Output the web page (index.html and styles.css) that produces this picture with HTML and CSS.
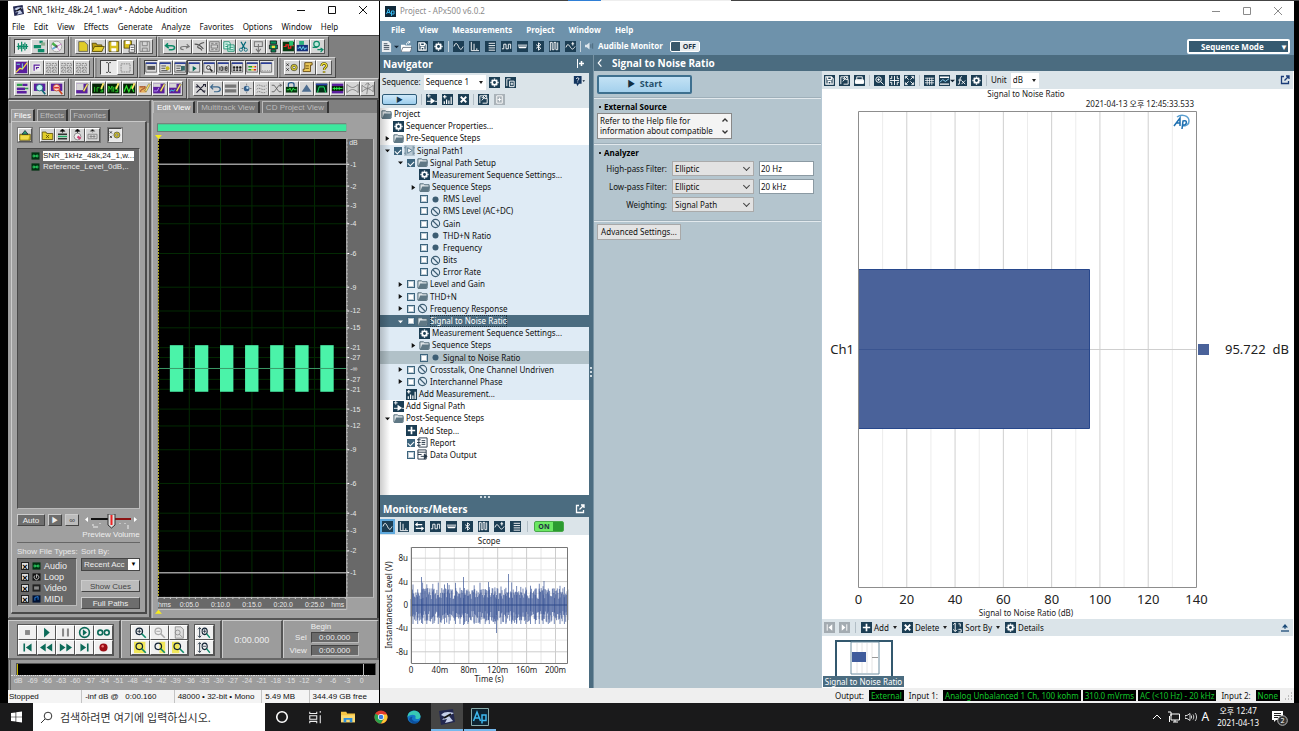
FILE: index.html
```html
<!DOCTYPE html>
<html lang="ko">
<head>
<meta charset="utf-8">
<title>Desktop</title>
<link rel="stylesheet" href="styles.css">
</head>
<body>
<div class="topline"><i class="tl-blue"></i><i class="tl-white"></i></div>
<main class="desktop">

<section class="aud" aria-label="Adobe Audition">
  <header class="titlebar">
    <svg class="app-icon" data-icon="audapp"></svg>
    <span class="title">SNR_1kHz_48k.24_1.wav* - Adobe Audition</span>
    <span class="winbtns"><button aria-label="Minimize" data-icon="min"></button><button aria-label="Maximize" data-icon="max"></button><button aria-label="Close" data-icon="close"></button></span>
  </header>
  <nav class="aud-menu"><a href="#">File</a><a href="#">Edit</a><a href="#">View</a><a href="#">Effects</a><a href="#">Generate</a><a href="#">Analyze</a><a href="#">Favorites</a><a href="#">Options</a><a href="#">Window</a><a href="#">Help</a></nav>
  <div class="aud-tools">
    <div class="trow r1">
      <div class="tgroup" data-tools="wave! multi cd"></div>
      <div class="tgroup" data-tools="new open save saveas saveg"></div>
      <div class="tgroup" data-tools="undo redo cutline trim copy cut paste mixp red bluew conv"></div>
    </div>
    <div class="trow r2">
      <div class="tgroup" data-tools="spect corner grp1 grp1 grp1"></div>
      <div class="tgroup" data-tools="ibeam! marquee"></div>
      <div class="tgroup" data-tools="win1! win2 win3 winplay! winzoom! wintime! winsel! winlvl! winblank!"></div>
      <div class="tgroup" data-tools="prefs script help"></div>
    </div>
    <div class="trow r3">
      <div class="tgroup" data-tools="bars lens1 lens2"></div>
      <div class="tgroup" data-tools="pen1 irs mis sinep pen2 pen3 pen4"></div>
      <div class="tgroup" data-tools="amp rev2 eqbars dot waves cross lockw tri trap midw bow bow2"></div>
    </div>
  </div>

  <div class="aud-main">
    <aside class="org">
      <div class="tabs"><button class="tab on">Files</button><button class="tab">Effects</button><button class="tab">Favorites</button></div>
      <div class="org-body">
        <div class="org-tools"><div class="og" data-tools="import"></div><div class="og og4" data-tools="closef insm eject insb"></div><div class="og" data-tools="prefs!"></div></div>
        <ul class="files">
          <li><svg data-icon="wavf"></svg><span class="sel">SNR_1kHz_48k,24_1,w...</span></li>
          <li><svg data-icon="wavf"></svg><span>Reference_Level_0dB,..</span></li>
        </ul>
        <div class="preview">
          <button class="gbtn auto">Auto</button><button class="gbtn" aria-label="Play">▶</button><button class="gbtn lit" aria-label="Loop">∞</button>
          <div class="vol"><svg viewBox="0 0 52 17" data-icon="slider"></svg><span>Preview Volume</span></div>
        </div>
        <div class="org-opts">
          <div class="types"><span class="cap">Show File Types:</span>
            <div class="typebox">
              <label><input type="checkbox" checked><svg data-icon="wavf"></svg>Audio</label>
              <label><input type="checkbox" checked><svg data-icon="loopf"></svg>Loop</label>
              <label><input type="checkbox" checked><svg data-icon="vidf"></svg>Video</label>
              <label><input type="checkbox" checked><svg data-icon="midf"></svg>MIDI</label>
            </div>
          </div>
          <div class="sort"><label class="cap" for="sortby">Sort By:</label>
            <span class="combo dark"><select id="sortby"><option>Recent Acc</option></select></span>
            <button class="gbtn lit">Show Cues</button>
            <button class="gbtn">Full Paths</button>
          </div>
        </div>
      </div>
    </aside>
    <section class="editor">
      <div class="tabs"><button class="tab on">Edit View</button><button class="tab">Multitrack View</button><button class="tab">CD Project View</button></div>
      <svg id="edit" class="edit" viewBox="0 0 226 505" role="img" aria-label="Waveform"></svg>
    </section>
  </div>

  <div class="transport">
    <div class="tp"><div class="pad p5" data-tools="stop play pause playc inf tostart rew ff toend rec"></div></div>
    <div class="tp zooms"><div class="pad p3" data-tools="zin zout zfull zsel zselr zsell"></div><div class="pad p1" data-tools="vin vout"></div></div>
    <div class="tp clock">0:00.000</div>
    <div class="tp selview">
      <span></span><b>Begin</b>
      <label for="s1">Sel</label><input id="s1" value="0:00.000">
      <label for="s2">View</label><input id="s2" value="0:00.000">
    </div>
  </div>
  <div class="levels"><div class="meter"></div><div class="scale" id="scale"></div></div>
  <footer class="aud-status"><span>Stopped</span><span>-inf dB @ &nbsp; 0:00.160</span><span>48000 • 32-bit • Mono</span><span>5.49 MB</span><span>344.49 GB free</span></footer>
</section>

<section class="apx" aria-label="APx500">
  <header class="titlebar pale">
    <svg class="app-icon" data-icon="ap"></svg>
    <span class="title">Project - APx500 v6.0.2</span>
    <span class="winbtns"><button aria-label="Minimize" data-icon="min"></button><button aria-label="Maximize" data-icon="max"></button><button aria-label="Close" data-icon="close"></button></span>
  </header>
  <div class="apx-top">
    <div>
      <nav class="apx-menu"><a href="#">File</a><a href="#">View</a><a href="#">Measurements</a><a href="#">Project</a><a href="#">Window</a><a href="#">Help</a></nav>
      <div class="apx-bar"><div class="ai" data-tools="doc caret openx savex gear"></div><i class="vsep"></i><div class="ai" data-tools="sine fft list square level bt digital sweep"></div><i class="vsep"></i><svg class="spk" data-icon="spk"></svg><b>Audible Monitor</b><button class="toggle">OFF</button></div>
    </div>
    <button class="mode">Sequence Mode<span>▼</span></button>
  </div>
  <div class="apx-main">
    <div class="navcol">
      <h2 class="bar nav-h">Navigator<svg data-icon="pin"></svg></h2>
      <div class="seqrow"><label for="seq">Sequence:</label><span class="combo tri white"><select id="seq"><option>Sequence 1</option></select></span><div class="ai" data-tools="gear copyx"></div><button class="helpb" aria-label="Help" data-icon="helpq"></button></div>
      <div class="runrow"><button class="run" aria-label="Run">▶</button><i class="vsep"></i><div class="ai" data-tools="addsp addmeas delx"></div><i class="vsep"></i><div class="ai" data-tools="expand addg"></div></div>
      <ul class="tree" id="tree"></ul>
      <div class="split"><svg viewBox="0 0 12 4"><path d="M1 1h2v2H1zM5 1h2v2H5zM9 1h2v2H9z" fill="#cdd9e0"/></svg></div>
      <h2 class="bar mon-h">Monitors/Meters<svg data-icon="popout"></svg></h2>
      <div class="monbar"><div class="ai" data-tools="sine! fft swap square level bt digital sweep list"></div><i class="vsep"></i><button class="toggle on">ON</button></div>
      <svg id="scope" class="scope" viewBox="0 0 209 153" role="img" aria-label="Scope"></svg>
    </div>
    <div class="gutter"><svg viewBox="0 0 4 12"><path d="M1 1h2v2H1zM1 5h2v2H1zM1 9h2v2H1z" fill="#cdd9e0"/></svg></div>
    <div class="work">
      <h2 class="bar work-h"><svg data-icon="back"></svg>Signal to Noise Ratio</h2>
      <div class="workcols">
        <div class="settings">
          <div class="sec"><button class="start"><span>▶</span>Start</button></div>
          <div class="sec"><h3>External Source</h3>
            <div class="note"><p>Refer to the Help file for information about compatible</p><span class="spin"><button aria-label="Up" data-icon="up"></button><button aria-label="Down" data-icon="down"></button></span></div></div>
          <div class="sec"><h3>Analyzer</h3>
            <div class="form">
              <label for="hp">High-pass Filter:</label><span class="combo chev"><select id="hp"><option>Elliptic</option></select></span><input aria-label="High-pass frequency" value="20 Hz">
              <label for="lp">Low-pass Filter:</label><span class="combo chev"><select id="lp"><option>Elliptic</option></select></span><input aria-label="Low-pass frequency" value="20 kHz">
              <label for="wt">Weighting:</label><span class="combo chev"><select id="wt"><option>Signal Path</option></select></span>
            </div></div>
          <div class="sec"><button class="adv">Advanced Settings...</button></div>
        </div>
        <div class="result">
          <div class="resbar"><div class="ai" data-tools="savex expand print"></div><i class="vsep"></i><div class="ai" data-tools="zoomx fitx fitc"></div><i class="vsep"></i><div class="ai" data-tools="table graph caret fx gear"></div><i class="vsep"></i><label for="unit">Unit</label><span class="combo tri white unit"><select id="unit"><option>dB</option></select></span><svg class="pop" data-icon="popoutb"></svg></div>
          <svg id="chart" class="chart" viewBox="0 0 472 530" role="img" aria-label="Signal to Noise Ratio"></svg>
          <div class="resbar low"><div class="ai" data-tools="prevg nextg"></div><i class="vsep"></i><button class="tx"><svg data-icon="plus"></svg>Add<i></i></button><button class="tx"><svg data-icon="delx"></svg>Delete<i></i></button><button class="tx"><svg data-icon="sortx"></svg>Sort By<i></i></button><button class="tx"><svg data-icon="gear"></svg>Details</button><svg class="pop" data-icon="upl"></svg></div>
          <div class="thumbs"><figure><svg viewBox="0 0 58 36"><rect x="1" y="1" width="56" height="36" fill="#fff" stroke="#33586e" stroke-width="2"/><path d="M16 2h28v32H16z" fill="#fff" stroke="#6d8ea1"/><path d="M22 3v30M27 3v30M32 3v30M37 3v30" stroke="#e4e4e4"/><path d="M17 12h14v10H17z" fill="#3f5c9c"/><path d="M37 17.500h6" stroke="#999"/></svg><figcaption>Signal to Noise Ratio</figcaption></figure></div>
        </div>
      </div>
    </div>
  </div>
  <footer class="apx-status"><span>Output:</span><b>External</b><span>Input 1:</span><b>Analog Unbalanced 1 Ch, 100 kohm</b><b>310.0 mVrms</b><b>AC (&lt;10 Hz) - 20 kHz</b><span>Input 2:</span><b>None</b><svg class="grip" data-icon="grip"></svg></footer>
</section>
</main>

<footer class="taskbar">
  <button class="startb" aria-label="Start" data-icon="winlogo"></button>
  <label class="search"><svg data-icon="mag"></svg><input aria-label="Search" value="검색하려면 여기에 입력하십시오."></label>
  <div class="apps"><button aria-label="Cortana" data-icon="cortana"></button><button aria-label="Task view" data-icon="tview"></button><button aria-label="Explorer" data-icon="folderw"></button><button aria-label="Chrome" data-icon="chrome"></button><button aria-label="Edge" data-icon="edge"></button><button class="act" aria-label="Audition" data-icon="audapp"></button><button class="runn" aria-label="APx" data-icon="apbig"></button></div>
  <div class="tray"><svg data-icon="chevup"></svg><svg data-icon="net"></svg><svg data-icon="snd"></svg><b>A</b><time>오후 12:47<br>2021-04-13</time><svg class="notif" data-icon="notif"></svg></div>
</footer>
<script src="app.js"></script>
</body>
</html>
```

FILE: styles.css
```css
* { box-sizing: border-box; }
html, body { height: 100%; margin: 0; }
body { display: flex; flex-direction: column; background: #000; overflow: hidden; font: 8px/12px "Noto Sans", "Noto Sans CJK KR", sans-serif; color: #111; }
button, input, select { font: inherit; color: inherit; margin: 0; padding: 0; border: 0; border-radius: 0; background: none; min-width: 0; }
a { color: inherit; text-decoration: none; }
h2, h3, p, ul, figure { margin: 0; padding: 0; }
ul { list-style: none; }
svg { display: block; flex: none; }
button > svg { width: 100%; height: 100%; }
.topline { height: 1px; flex: none; background: #444; display: flex; padding-left: 568px; }
.tl-blue { width: 33px; background: #2f7fd6; }
.tl-white { width: 130px; background: #eee; }
.desktop { flex: 1; min-height: 0; display: grid; grid-template-columns: 371fr 914fr; gap: 1px; padding: 0 5px 0 8px; }
.titlebar { display: flex; align-items: center; background: #fff; height: 18px; flex: none; padding-left: 5px; gap: 3px; }
.titlebar .title { flex: 1; }
.app-icon { width: 11px; height: 11px; }
.winbtns { display: flex; gap: 21px; padding-right: 11px; }
.winbtns button { width: 10px; height: 10px; }

/* Audition */
.aud { display: flex; flex-direction: column; background: #9c9c9c; min-height: 0; min-width: 0; }
.aud-menu { display: flex; gap: 9px; background: #fff; height: 16px; line-height: 16px; padding-left: 4px; flex: none; }
.aud-tools { background: #7f7f7f; flex: none; border-top: 1px solid #444; }
.trow { display: flex; height: 21px; }
.r1 { padding-right: 50px; }
.r2 { padding-right: 43px; }
.tgroup { display: flex; background: #a0a0a0; padding: 2px 3px 2px 5px; border: solid; border-width: 1px; border-color: #d0d0d0 #484848 #484848 #c8c8c8; box-shadow: inset 2px 0 #8b8b8b; min-width: 0; }
.tgroup button { flex: 1; height: 15px; }
.r1 .tgroup:nth-child(1), .r3 .tgroup:nth-child(1) { flex: 56; }
.r1 .tgroup:nth-child(2) { flex: 86; }
.r1 .tgroup:nth-child(3) { flex: 179; }
.r2 .tgroup:nth-child(1) { flex: 86; }
.r2 .tgroup:nth-child(2) { flex: 39; }
.r2 .tgroup:nth-child(3) { flex: 148; }
.r2 .tgroup:nth-child(4) { flex: 55; }
.r3 .tgroup:nth-child(2) { flex: 117; }
.r3 .tgroup:nth-child(3) { flex: 198; }
.tgroup button, .og button, .pad button { background: #d6d6d6; border: 1px solid; border-color: #fff #555 #555 #fff; display: block; }
.tgroup button.down, .og button.down { background: #e8e8e8; border-color: #444 #eee #eee #444; }
.aud-main { flex: 1; min-height: 0; display: grid; grid-template-columns: 142fr 227fr; gap: 1px; border-top: 1px solid #555; padding-left: 1px; }
.org, .editor { display: flex; flex-direction: column; min-height: 0; min-width: 0; }
.org { border: solid; border-width: 1px 2px 1px 0; border-color: #ccc #555 #666 #bbb; padding: 8px 2px 3px; background: linear-gradient(#808080 22px, #a0a0a0 22px); font-family: "Liberation Sans", Arial, sans-serif; }
.tabs { display: flex; gap: 2px; color: #e4e4e4; height: 12px; flex: none; font-family: "Liberation Sans", Arial, sans-serif; }
.tab { border: solid; border-width: 1px 2px 0 1px; border-color: #bbb #333 #333 #bbb; background: #757575; padding: 0 3px; line-height: 11px; color: #bdbdbd; white-space: nowrap; }
.tab.on { background: #9c9c9c; color: #fff; }
.org .tab { padding: 0 2px; }
.org-body { flex: 1; min-height: 0; display: flex; flex-direction: column; padding: 5px 5px 3px; border: solid; border-width: 1px 2px 2px 1px; border-color: #c8c8c8 #4a4a4a #4a4a4a #ccc; background: #a0a0a0; }
.org-tools { display: flex; gap: 6px; height: 16px; margin-bottom: 5px; flex: none; }
.og { display: flex; border: 1px solid #777; }
.og button { width: 14px; height: 14px; }
.og4 button { width: 15px; }
.files { flex: 1; background: #696969; border: 1px solid; border-color: #4a4a4a #bbb #bbb #4a4a4a; color: #eee; padding: 1px 2px 0 13px; min-height: 0; }
.files li { display: flex; align-items: center; gap: 3px; height: 11px; white-space: nowrap; }
.files span { line-height: 10px; }
.files svg, .typebox svg { width: 9px; height: 8px; }
.files .sel { background: #fff; color: #222; }
.preview { display: flex; align-items: flex-start; gap: 3px; height: 34px; padding-top: 5px; border-bottom: 1px solid #666; flex: none; }
.gbtn { background: #6d6d6d; color: #eee; border: 1px solid; border-color: #ccc #444 #444 #ccc; height: 12px; line-height: 9px; width: 14px; }
.gbtn.auto { width: 28px; }
.gbtn.lit { background: #bcbcbc; color: #444; }
.vol { flex: 1; text-align: center; color: #eee; white-space: nowrap; }
.vol svg { width: 52px; height: 17px; margin: 0 auto; }
.vol span { display: block; line-height: 8px; }
.org-opts { display: flex; gap: 4px; padding-top: 3px; flex: none; }
.types { width: 60px; }
.sort { flex: 1; display: flex; flex-direction: column; gap: 5px; }
.sort .gbtn { width: 100%; }
.cap { display: block; color: #e8e8e8; white-space: nowrap; line-height: 12px; height: 12px; }
.sort .cap { margin-bottom: -5px; }
.typebox { background: #696969; border: 1px solid; border-color: #444 #bbb #bbb #444; color: #eee; padding: 1px 3px 1px; height: 48px; font-size: 9px; }
.typebox label { display: flex; align-items: center; gap: 3px; height: 11px; }
.typebox input { appearance: none; width: 8px; height: 8px; background: #ddd; border: 1px solid #222; display: grid; place-items: center; }
.typebox input::before { content: "×"; color: #000; font: bold 9px/8px "Liberation Sans", sans-serif; }
.combo { position: relative; display: block; }
.combo select { appearance: none; width: 100%; height: 100%; padding-left: 2px; }
.combo::after { content: ""; position: absolute; pointer-events: none; }
.combo.dark { height: 13px; background: #6d6d6d; border: 1px solid #444; color: #eee; margin-bottom: 4px; }
.combo.dark::after { content: "▼"; right: 0; top: 0; bottom: 0; width: 11px; background: #fff; color: #000; font-size: 6px; text-align: center; line-height: 11px; }
.editor { background: #7f7f7f; border-left: 1px solid #bbb; border-right: 2px solid #333; }
.editor .tabs { margin-top: 1px; }
.edit { width: 100%; flex: 1; min-height: 0; background: #a0a0a0; font-family: "Liberation Sans", Arial, sans-serif; font-size: 7px; }
.transport { display: flex; height: 42px; flex: none; border-top: 2px solid #555; border-bottom: 2px solid #666; color: #eee; background: #9c9c9c; }
.tp { display: flex; padding: 3px 5px 3px 8px; border: solid; border-width: 1px 2px 0 1px; border-color: #ccc #555 #555 #ccc; align-items: center; gap: 5px; }
.pad { display: grid; border: 1px solid #555; }
.pad button { width: 19px; height: 15px; background: #f0f0f0; }
.p5 { grid-template-columns: repeat(5, auto); }
.p3 { grid-template-columns: repeat(3, auto); }
.tp.clock { flex: 60; justify-content: center; font: 9px/12px "Liberation Sans", sans-serif; padding: 0; }
.tp.selview { flex: 95; display: grid; grid-template-columns: 22px 48px; grid-template-rows: 8px 12px 12px; gap: 1px 4px; padding: 1px; align-content: center; font-family: "Liberation Sans", sans-serif; }
.selview b { font-weight: 400; line-height: 8px; }
.selview label { text-align: right; line-height: 11px; }
.selview input { width: 48px; height: 11px; background: #696969; border: 1px solid; border-color: #444 #bbb #bbb #444; text-align: center; font-size: 8px; }
.levels { height: 30px; padding: 3px 3px 0 5px; flex: none; border-left: 3px double #666; }
.meter { height: 12px; background: linear-gradient(90deg, #c8b800 1px, #000 1px); border: 1px solid #555; border-bottom: 0; position: relative; }
.meter::after { content: ""; position: absolute; right: 11px; top: 0; bottom: 0; width: 1px; background: #bbb; }
.scale { display: flex; color: #e0e0e0; font: 7px/10px "Liberation Sans", sans-serif; margin-left: -5px; padding-right: 7px; }
.scale span { flex: 1; text-align: center; width: 0; white-space: nowrap; border-top: 1px dotted #ddd; }
.aud-status { display: flex; background: #f4f4f4; height: 13px; line-height: 13px; flex: none; white-space: nowrap; font-family: "Liberation Sans", Arial, sans-serif; }
.aud-status span { padding-left: 3px; border-right: 1px solid #c4c4c4; flex: 50; overflow: hidden; }
.aud-status span:nth-child(1) { flex: 75; padding-left: 1px; }
.aud-status span:nth-child(2) { flex: 92; }
.aud-status span:nth-child(3) { flex: 87; }
.aud-status span:nth-child(4) { flex: 45; }
.aud-status span:nth-child(5) { flex: 69; border: 0; }

/* APx500 */
.apx { display: flex; flex-direction: column; background: #b4c5ce; min-height: 0; min-width: 0; }
.titlebar.pale { height: 20px; color: #8a8a8a; gap: 4px; }
.apx-top { background: #6e92ab; display: flex; justify-content: space-between; align-items: flex-end; height: 34px; flex: none; color: #fff; }
.apx-menu { display: flex; gap: 14px; padding-left: 11px; font: 700 8px/17px "Open Sans", sans-serif; height: 16px; }
.apx-bar { display: flex; align-items: center; gap: 4px; height: 18px; padding-left: 1px; font: 8px/12px "Open Sans", sans-serif; }
.apx-bar b { font-weight: 700; }
.ai { display: flex; gap: 4px; }
.ai button { width: 11px; height: 11px; }
.apx-bar .ai, .seqrow .ai, .runrow .ai { gap: 5px; }
.ai button.down { outline: 2px solid #5fa9dd; }
.ai .caret { width: 5px; margin: 0 -3px; }
.resbar .ai .caret { margin: 0 -3px 0 -4px; }
.vsep { width: 1px; height: 11px; background: #c8d4dc; flex: none; }
.spk { width: 9px; height: 10px; }
.toggle { width: 30px; height: 11px; border: 1px solid #fff; border-radius: 2px; background: linear-gradient(90deg, #39576a 9px, #e8edf0 9px); color: #234; font: 700 7px/9px "Open Sans", sans-serif; padding-left: 9px; margin-left: 3px; }
.toggle.on { background: linear-gradient(90deg, #6be863 18px, #2b9b30 18px); padding: 0 10px 0 0; border-color: #49a84a; margin-left: 0; }
.mode { width: 103px; height: 15px; margin: 0 4px 1px 0; border: 2px solid #fff; border-radius: 2px; background: #355a70; font: 700 8px/11px "Open Sans", sans-serif; display: flex; justify-content: space-between; padding-left: 12px; }
.apx-main { flex: 1; min-height: 0; display: grid; grid-template-columns: 209fr 5fr 700fr; }
.bar { background: #4b6c80; color: #fff; display: flex; align-items: center; font: 700 10px/16px "Open Sans", sans-serif; flex: none; }
.navcol { display: flex; flex-direction: column; min-height: 0; min-width: 0; background: #dbe4e9; }
.nav-h { height: 18px; padding: 0 4px 0 3px; justify-content: space-between; }
.nav-h svg, .mon-h svg { width: 10px; height: 10px; }
.seqrow { display: flex; align-items: center; height: 18px; gap: 3px; padding: 0 3px 0 2px; }
.combo.white { background: #fff; width: 62px; height: 15px; }
.combo.tri::after { right: 3px; top: 6px; border: 2px solid transparent; border-top: 3px solid #222; }
.helpb { width: 14px; height: 12px; margin-left: auto; }
.runrow { display: flex; align-items: center; height: 17px; gap: 4px; padding-left: 2px; }
.run { width: 35px; height: 11px; border: 1px solid #2e5b78; border-radius: 2px; background: linear-gradient(#cfe9fa, #9ccdec); font-size: 7px; line-height: 8px; color: #16384d; }
.runrow .vsep, .monbar .vsep, .resbar .vsep { background: #b2bec6; }
.tree { flex: 1; min-height: 0; background: #fff; display: flex; flex-direction: column; padding: 0 0 34px; position: relative; white-space: nowrap; }
.tree::after { content: ""; position: absolute; left: 0; top: 0; bottom: 0; width: 10px; background: linear-gradient(90deg, #0003, #0000); }
.tree li { flex: 1; min-height: 0; display: flex; align-items: center; }
.tree .blue { background: #dfebf5; }
.tree .hl { background: #b1c1c8; }
.tree .cur { background: #4b6c80; color: #fff; }
.tree .cur .lbl { outline: 1px dotted #1d2f3a; outline-offset: -1px; }
.tree .l0 { padding-left: 1px; }
.tree .l2 { padding-left: 13px; }
.tree .l3 { padding-left: 26px; }
.tree .ar { width: 13px; padding-left: 5px; flex: none; }
.tree .ar svg { width: 5px; height: 7px; }
.tree input { appearance: none; width: 8px; height: 8px; border: 1px solid #3c647d; background: #fff; margin: 0 2px 0 1px; outline: 1px solid #3c647d55; outline-offset: -2px; flex: none; }
.tree input:checked { background: #3c647d; display: grid; place-items: center; outline: 0; }
.tree input:checked::before { content: ""; width: 5px; height: 3px; border: solid #fff; border-width: 0 0 1px 1px; transform: rotate(-45deg); }
.tree .ic { width: 11px; height: 11px; margin-right: 2px; }
.split { background: #4b6c80; height: 5px; flex: none; }
.split svg { width: 12px; height: 4px; margin: 0 auto; }
.mon-h { height: 17px; padding: 0 4px 0 3px; justify-content: space-between; }
.monbar { display: flex; align-items: center; height: 18px; gap: 6px; padding-left: 2px; flex: none; }
.monbar .ai { gap: 5px; }
.scope { width: 100%; flex: none; height: 153px; background: #fff; }
.gutter { background: #4b6c80; border-right: 1px solid #7893a3; display: flex; align-items: center; }
.gutter svg { width: 4px; height: 12px; }
.work { display: flex; flex-direction: column; min-width: 0; min-height: 0; }
.work-h { height: 16px; gap: 7px; padding-left: 2px; }
.work-h svg { width: 9px; height: 10px; }
.workcols { flex: 1; min-height: 0; display: grid; grid-template-columns: 227fr 473fr; }
.settings { min-width: 0; padding-top: 4px; }
.sec { padding: 0 3px 5px; border-bottom: 1px solid #e2e9ed; margin-bottom: 1px; box-shadow: 0 -1px #9fb0ba inset; }
.sec:last-child { border: 0; box-shadow: none; margin-top: 2px; }
.start { width: 95px; height: 19px; border: 2px solid #3e708f; border-radius: 2px; background: linear-gradient(#c3e2f5, #a4d0ec); font: 700 9px/14px "Open Sans", sans-serif; color: #234f6b; display: flex; justify-content: center; gap: 4px; margin-bottom: -1px; }
.start span { color: #122f42; }
.sec h3 { font: 700 8px/13px "Open Sans", sans-serif; padding-left: 7px; position: relative; color: #000; }
.sec h3::before { content: ""; position: absolute; left: 2px; top: 6px; width: 2px; height: 2px; background: #222; }
.note { width: 135px; height: 26px; background: #f4f4f4; border: 1px solid #888; display: flex; padding-left: 2px; line-height: 10px; }
.note p { flex: 1; padding-top: 2px; }
.spin { display: flex; flex-direction: column; justify-content: space-around; }
.spin button { width: 12px; height: 8px; }
.form { display: grid; grid-template-columns: 69px 82px 55px; gap: 3px 5px; padding: 2px 0 4px 1px; align-items: center; }
.form label { text-align: right; white-space: nowrap; }
.form .chev { height: 15px; background: #e2e2e2; border: 1px solid #aaa; }
.combo.chev::after { right: 4px; top: 3px; width: 4px; height: 4px; border: solid #444; border-width: 0 1px 1px 0; transform: rotate(45deg); }
.form input { background: #fff; border: 1px solid #8b9aa3; height: 15px; padding-left: 1px; }
.adv { height: 16px; width: 84px; background: #e4e4e4; border: 1px solid #a8a8a8; white-space: nowrap; }
.result { display: flex; flex-direction: column; background: #fff; min-width: 0; min-height: 0; border-left: 1px solid #b6c8d4; }
.resbar { display: flex; align-items: center; height: 18px; background: #dbe4e9; gap: 4px; padding: 0 3px 0 2px; flex: none; margin-right: 1px; }
.resbar .unit { width: 28px; }
.resbar .pop { width: 10px; height: 10px; margin-left: auto; }
.resbar.low { height: 17px; gap: 5px; }
.tx { display: flex; align-items: center; gap: 2px; white-space: nowrap; }
.tx svg { width: 11px; height: 11px; }
.tx i { border: 2px solid transparent; border-top: 3px solid #222; margin: 2px 0 0 2px; }
.chart { width: 100%; flex: 1; min-height: 0; }
.thumbs { height: 52px; padding: 4px 0 0 1px; flex: none; }
.thumbs figure { width: 81px; }
.thumbs svg { width: 58px; height: 36px; margin: 0 auto; }
.thumbs figcaption { background: #4b6c80; color: #fff; text-align: center; height: 11px; line-height: 11px; white-space: nowrap; }
.apx-status { background: #efefef; height: 15px; display: flex; align-items: center; justify-content: flex-end; gap: 5px; flex: none; white-space: nowrap; padding-right: 1px; }
.apx-status b { font-weight: 400; background: #000; color: #12c42a; line-height: 11px; padding: 0 2px; }
.apx-status b + b { margin-left: -3px; }
.grip { width: 8px; height: 8px; }

/* Taskbar */
.taskbar { height: 28px; background: #1a1a1b; display: flex; flex: none; align-items: stretch; color: #fff; }
.startb { width: 33px; padding: 8px 11px; }
.search { width: 232px; background: #fff; color: #333; display: flex; align-items: center; gap: 7px; padding-left: 7px; }
.search svg { width: 13px; height: 13px; }
.search input { flex: 1; font: 11px/20px "Noto Sans CJK KR", sans-serif; }
.apps { display: flex; flex: 1; padding-left: 1px; gap: 1px; }
.apps button { width: 32px; padding: 5px 7px; border-bottom: 2px solid transparent; border-top: 2px solid transparent; }
.apps button:nth-child(-n+3) { padding: 5px 9px; }
.apps .act { background: #454545; border-color: #454545 #454545 #76b9ed; padding: 4px 7px; }
.apps .runn { border-bottom-color: #76b9ed; padding: 3px 6px; }
.tray { display: flex; align-items: center; gap: 5px; padding-right: 11px; }
.tray svg { width: 12px; height: 12px; }
.tray b { font: 12px/14px "Noto Sans", sans-serif; }
.tray time { text-align: center; font-size: 8px; line-height: 12px; padding: 0 7px 0 3px; white-space: nowrap; }
.tray .notif { width: 17px; height: 17px; }
```

FILE: app.js
```js
const T = '#1c3e54', P = '#5b1f9e', G = '#0d8a68';
const tile = s => `<rect width="12" height="12" fill="${T}"/><g fill="none" stroke="#fff">${s}</g>`;
const winf = s => `<path d="M1 2h14v12H1z" fill="#dcdcdc" stroke="#555"/><path d="M1 1.500h14v2H1z" fill="#2b3f9c"/>${s}`;
const pen = s => `<path d="M0 2h14v12H0z" fill="${P}"/>${s}<path d="M8 11l5-9 2 1-5 9z" fill="#ffe96a" stroke="#333" stroke-width=".5"/>`;
const greenbox = s => `<path d="M0 2h15v12H0z" fill="#052405"/>${s}<path d="M10 8l3-7 2 1-3 7z" fill="#ffe96a"/>`;
const note = (f, s) => `<path d="M3 2h7l4 4v8H3z" fill="${f}" stroke="#555"/>${s || ''}`;
const mag = (s, c) => `<circle cx="6.500" cy="6.500" r="4" fill="none" stroke="${c || '#123'}" stroke-width="1.500"/><path d="M9.500 9.500l5 5" stroke="${c || G}" stroke-width="2"/>${s || ''}`;
const gry = '#777';
// name: [viewBox size, markup]
const ICONS = {
  min: [10, '<path d="M1 5.500h8" stroke="currentColor"/>'],
  max: [10, '<path d="M1.500 1.500h7v7h-7z" fill="none" stroke="currentColor"/>'],
  close: [10, '<path d="M1 1l8 8M9 1l-8 8" stroke="currentColor"/>'],
  audapp: [16, '<path d="M0 2l14-2 2 13-14 3z" fill="#232850"/><path d="M2 6c4-4 8-3 13-2l-5 3 4 5-8 2 2-4-5 1 3-3z" fill="#c5cfea"/><path d="M5 9l7-4" stroke="#111" stroke-width="2"/>'],
  ap: [11, '<rect width="11" height="11" fill="#10293a"/><path d="M1.500 8l2-5 2 5M2 6.500h3M6.500 10V5h2.500v3H7" fill="none" stroke="#35b7ee"/>'],
  apbig: [18, '<path d="M.5.5h17v17H.5z" fill="#0d2331" stroke="#8aa"/><path d="M2.500 13l3.500-9 3.500 9M4 10h4M11 15.500V7h4v5.500h-4" fill="none" stroke="#3db8ee" stroke-width="1.500"/>'],
  wave: [16, `<path d="M1 8h14M3 4v8M5 6v5M7 2v12M9 5v6M11 3v10M13 5v6" stroke="${G}" stroke-width="1.500"/>`],
  multi: [16, `<path d="M8 1h4v3H8zM1 6h9v4H1zM6 11h8v4H6z" fill="${G}"/><path d="M10 3h5v4h-5z" fill="#8fae8f"/>`],
  cd: [16, '<circle cx="8" cy="8" r="6.500" fill="#eee" stroke="#999"/><path d="M8 8l6-3M8 8l4 5" stroke="#d66bd6"/><path d="M8 8L3 4" stroke="#48b048" stroke-width="3"/><path d="M8 8l-5 3" stroke="#6ad" stroke-width="2"/><circle cx="8" cy="8" r="1.500" fill="#555"/>'],
  new: [16, note('#e0cc28')],
  open: [16, '<path d="M1 4h5l1 2h6v8H2z" fill="#b99c14" stroke="#544600"/><path d="M4 8h12l-3 6H1z" fill="#e6cf30" stroke="#544600"/>'],
  save: [16, '<path d="M2 2h12v12H2z" fill="#d8c020" stroke="#544600"/><path d="M5 2h6v5H5zM5 10h6v4H5z" fill="#fff"/>'],
  saveas: [16, '<path d="M1 1h9v9H1z" fill="#d8c020" stroke="#544600"/><path d="M3 1h5v4H3z" fill="#fff"/><path d="M8 6h6v9H7z" fill="#fff" stroke="#333"/><path d="M9 9h4M9 12h4" stroke="#333"/>'],
  saveg: [16, '<path d="M2 2h12v12H2zM5 2v5h6V2M5 14v-4h6v4" fill="#ccc" stroke="#777"/>'],
  undo: [16, `<path d="M5 4L2 7l4 3M2.500 7h7c5 0 5 5 0 5H6" fill="none" stroke="${G}" stroke-width="2"/>`],
  redo: [16, `<path d="M11 5l3 3-4 2M13 8H7c-5 0-5 4 0 4" fill="none" stroke="${gry}" stroke-width="1.500"/>`],
  cutline: [16, '<path d="M2 5c5 0 7 2 11 6M14 3C9 4 5 7 6 9s4 0 5 4" fill="none" stroke="#555" stroke-width="1.500"/>'],
  trim: [16, '<path d="M2 2h12v12H2zM4 6h8v4H4zM4 4h3M9 4h3M4 12h3M9 12h3" fill="none" stroke="#666"/>'],
  copy: [16, `<path d="M1 2h7l1 2v7H1zM6 6h8v8H6z" fill="#d9f5ec" stroke="${G}"/><path d="M3 5h3M3 8h3M8 9h5M8 12h5" stroke="${G}"/>`],
  cut: [16, '<path d="M5 2l5 9M11 2L6 11" stroke="#067" stroke-width="1.500"/><circle cx="5" cy="12" r="2" fill="none" stroke="#067"/><circle cx="11" cy="12" r="2" fill="none" stroke="#067"/>'],
  paste: [16, '<path d="M3 2h10v6H3zM8 5v9M5 11l3 4 3-4" fill="none" stroke="#777" stroke-width="1.300"/>'],
  mixp: [16, '<path d="M4 1h8v4H4zM3 6h10v5H3zM5 12h6v3H5z" fill="#0a8f5c" stroke="#111"/><path d="M6 7h4v3H6z" fill="#f5e03c"/>'],
  red: [16, '<path d="M1 2h14v12H1z" fill="#063b12"/><path d="M2 8h3V6h3v4h3V7h4" fill="none" stroke="#e22" stroke-width="1.500"/><path d="M9 1h5v6H9z" fill="#27c06e"/>'],
  bluew: [16, '<path d="M4 1h6v5H4z" fill="#2bb07e"/><path d="M1 6h14v8H1z" fill="#16307c"/><path d="M2 10h2l1-2 2 4 2-4 2 4 1-2h2" fill="none" stroke="#7ef"/>'],
  conv: [16, `<circle cx="7" cy="5" r="3.500" fill="#bfe9da" stroke="${G}" stroke-width="1.500"/><path d="M2 9h6M8 12h6M12 10l3 2-3 3" stroke="${G}" fill="none" stroke-width="1.500"/>`],
  spect: [16, `<path d="M1 1h14v14H1z" fill="${P}"/><path d="M1 14l5-5 3 1 6-8" fill="none" stroke="#f3e33b" stroke-width="1.500"/><path d="M2 4h4M9 3v7" stroke="#7fe"/>`],
  corner: [16, `<path d="M3 3h10v10H3z" fill="#eee"/><path d="M5 12V5h7M8 10V8h3" fill="none" stroke="${P}" stroke-width="1.500"/>`],
  grp1: [16, '<path d="M2 3h5v3H2zM9 3h5v3H9zM2 8h5v2H2zM9 8h5v2H9zM2 12h5v2H2zM9 12h5v2H9z" fill="none" stroke="#777" stroke-dasharray="2 1"/>'],
  ibeam: [16, '<path d="M5 2h2l1 1 1-1h2M8 3v10M5 14h2l1-1 1 1h2" fill="none" stroke="#222"/>'],
  marquee: [16, '<path d="M2.500 3.500h11v10h-11z" fill="none" stroke="#777" stroke-dasharray="2 1"/>'],
  win1: [16, winf('<path d="M3 6h10v5H3z" fill="#555"/>')],
  win2: [16, winf('<path d="M3 6h6M3 9h5M3 12h8" stroke="#333"/><circle cx="11" cy="9" r="2.500" fill="#c8bb22"/>')],
  win3: [16, winf('<path d="M3 6h6M3 9h5M3 12h8" stroke="#333"/><path d="M9 6h5v6H9z" fill="#386a6a"/>')],
  winplay: [16, winf('<path d="M6 6l5 3-5 4z" fill="#0a6a5a"/>')],
  winzoom: [16, winf('<circle cx="7" cy="8" r="2.500" fill="none" stroke="#222"/><path d="M9 10l3 3" stroke="#222" stroke-width="2"/>')],
  wintime: [16, winf('<path d="M3 7v5M5 7h2v5H5zM9 7v5M11 7h2v5h-2zM11 9h2" stroke="#222" fill="none"/>')],
  winsel: [16, winf('<path d="M3 7h2v2H3zM7 7h2v2H7zM11 7h2v2h-2zM3 11h2v1H3zM7 11h2v1H7zM11 11h2v1h-2z" stroke="#222"/>')],
  winlvl: [16, winf('<path d="M3 7h5M3 11h4" stroke="#1c9a2c" stroke-width="2"/><path d="M8 7h3M7 11h3" stroke="#e8dc20" stroke-width="2"/><path d="M11 7h2M10 11h3" stroke="#d22" stroke-width="2"/>')],
  winblank: [16, winf('<path d="M3 12h1M6 12h1M9 12h1M12 12h1" stroke="#777"/>')],
  prefs: [16, '<path d="M1 3l3 3M4 3L1 6M1 9l3 3M4 9l-3 3" stroke="#222"/><circle cx="10.500" cy="8" r="4" fill="#d8c828" stroke="#554"/><circle cx="10.500" cy="8" r="1.500" fill="#fff" stroke="#554"/>'],
  script: [16, '<path d="M4 2h9v3h-2v8H2v-3h2z" fill="#eac85a" stroke="#5a3b00"/><path d="M5 6h4M5 9h4" stroke="#5a3b00"/>'],
  help: [16, '<path d="M5 6c0-4 6-4 6 0 0 2-3 2-3 5M8 12.500v2" fill="none" stroke="#443c00" stroke-width="3"/><path d="M5 6c0-4 6-4 6 0 0 2-3 2-3 5M8 12.500v2" fill="none" stroke="#f2e43a" stroke-width="1.500"/>'],
  bars: [16, `<path d="M1 2h7v3H1zM1 7h14v2H1z" fill="#2fa04a"/><path d="M8 2h6v3H8zM1 11h12v3H1z" fill="${P}"/><path d="M1 7h10v3H1z" fill="${P}"/>`],
  lens1: [16, `<path d="M1 2h14v9H1z" fill="${P}"/><circle cx="8" cy="7" r="4" fill="#bff5ee" stroke="#167"/><path d="M11 10l4 5" stroke="#167" stroke-width="2"/>`],
  lens2: [16, `<path d="M1 2h14v9H1z" fill="${P}"/><circle cx="8" cy="7" r="4" fill="#ffd9c8" stroke="#c42"/><path d="M5 7h6" stroke="#d33" stroke-width="2"/><path d="M11 10l4 5" stroke="#c42" stroke-width="2"/>`],
  pen1: [16, pen('<path d="M0 2h9v8H0z" fill="#d6d6d6"/>')],
  irs: [16, greenbox('<path d="M3 6v6M6 12V7h3M13 8h-2v2h2v2h-3" fill="none" stroke="#2fe02f"/>')],
  mis: [16, greenbox('<path d="M2 12V5l2 4 2-4v7M8 6v6M13 6h-3v3h3v3h-3" fill="none" stroke="#2fe02f"/>')],
  sinep: [16, greenbox('<path d="M1 12L4 5l3 7 3-7 3 7" fill="none" stroke="#2fe02f" stroke-width="1.500"/>')],
  pen2: [16, '<path d="M1 5h9v8H1z" fill="#e9b05c"/><path d="M3 12c0-5 7-2 5-7M2 6h5" fill="none" stroke="#7a1f1f"/><path d="M8 11l5-9 2 1-5 9z" fill="#ffe96a" stroke="#333" stroke-width=".5"/>'],
  pen3: [16, pen('<path d="M0 2h9v4H0z" fill="#d6d6d6"/><path d="M1 11h4l2-4" stroke="#c9a0ff" fill="none"/>')],
  pen4: [16, pen('<path d="M0 2h9v5H0z" fill="#d6d6d6"/><path d="M1 12c2-5 4 2 6-3" stroke="#3fe" fill="none"/>')],
  amp: [16, '<path d="M3 3l10 10M13 3L3 13M2 6h3M10 11h4M11 3h3v3" fill="none" stroke="#223" stroke-width="1.300"/>'],
  rev2: [16, '<path d="M5 3L2 6l3 3M2 6h8c5 0 5 6 0 6H6" fill="none" stroke="#3b678c" stroke-width="1.500"/>'],
  eqbars: [16, '<path d="M1 3h14v4H1zM1 9h14v4H1z" fill="#777"/>'],
  dot: [16, '<circle cx="8" cy="8" r="3.500" fill="#345e8a"/><circle cx="9" cy="7" r="1.500" fill="#bde"/><path d="M2 8h2M12 8h2M8 2v2M8 12v2" stroke="#777"/>'],
  waves: [16, '<path d="M2 5c4-4 6 3 12-1M2 9c4-4 6 3 12-1M2 13c4-4 6 3 12-1" fill="none" stroke="#777" stroke-dasharray="2 1"/>'],
  cross: [16, '<path d="M2 4h3l6 8h3M2 12h3l6-8h3M12 2l2 2-2 2" fill="none" stroke="#555"/>'],
  lockw: [16, '<path d="M4 7V3c0-3 7-3 7 0v4" fill="none" stroke="#258" stroke-width="1.500"/><path d="M1 6h14v7H1z" fill="#04380e"/><path d="M2 9.500h3l1-2 2 4 2-4 1 2h3" fill="none" stroke="#3f5"/>'],
  tri: [16, '<path d="M8 3l6 9H2z" fill="#4d6d90"/>'],
  trap: [16, '<path d="M1 2h14v11H1z" fill="#043018"/><path d="M1 3h14" stroke="#2e3fa8" stroke-width="2"/><path d="M3 13l2-7h6l2 7" fill="none" stroke="#2f7"/>'],
  midw: [16, `<path d="M1 2h14v12H1z" fill="${P}"/><path d="M1 5h14v6H1z" fill="#052405"/><path d="M2 8h12M4 6v4M7 6v4M10 6v4" stroke="#3f5"/>`],
  bow: [16, '<path d="M1 3c6 5 8 5 14 0v10c-6-5-8-5-14 0z" fill="none" stroke="#777"/>'],
  bow2: [16, '<path d="M1 4c6 5 8 5 14 0v8c-6-5-8-5-14 0zM9 1L7 15M11 4l-3-3-3 3" fill="none" stroke="#777"/>'],
  import: [16, '<path d="M1 7h14v8H1z" fill="#d8c020" stroke="#544600"/><path d="M4 7l4-5 4 5z" fill="#2d9c72" stroke="#123"/><path d="M2 9h12l-2 5H2z" fill="#f1db4c"/>'],
  closef: [16, '<path d="M1 4h5l1 2h8v8H1z" fill="#e0cc28" stroke="#544600"/><path d="M6 8l4 4M10 8l-4 4" stroke="#544600"/>'],
  insm: [16, '<path d="M8 0l3 3H5zM8 3v2" stroke="#111"/><path d="M2 7h12M2 13h12" stroke="#333" stroke-width="2"/><path d="M2 10h12" stroke="#2a6" stroke-width="2"/>'],
  eject: [16, '<path d="M8 0l3 3H5zM8 3v3" stroke="#111"/><circle cx="8" cy="10" r="4.500" fill="#eee" stroke="#777"/><path d="M8 10l4 3" stroke="#c47" stroke-width="3"/>'],
  insb: [16, '<path d="M8 0l3 3H5zM8 3v2" stroke="#888"/><path d="M2 7h12v6H2zM4 10h8M6 8v4M10 8v4" fill="none" stroke="#777"/>'],
  wavf: [10, '<rect width="10" height="9" y=".5" fill="#031"/><path d="M1 5h8M3 3v4M4 4v2M6 4v2M7 3v4" stroke="#2fe06a"/>'],
  loopf: [10, '<rect width="10" height="9" y=".5" fill="#111"/><path d="M3 3a3 3 0 1 0 4 0M5 6V2l2 1" fill="none" stroke="#ddd"/>'],
  vidf: [10, '<rect width="10" height="9" y=".5" fill="#222"/><path d="M2 3h6v4H2z" fill="#888"/>'],
  midf: [10, '<rect width="10" height="9" y=".5" fill="#013"/><path d="M3 7V3l4-1v4" fill="none" stroke="#39f"/>'],
  slider: [0, '<path d="M3 3L0 5.500 3 8zM49 3l3 2.500L49 8z" fill="#fff"/><path d="M6 5h40" stroke="#111" stroke-width="2"/><path d="M28 5h18" stroke="#8c1414" stroke-width="2"/><path d="M8 13h5M8 10v2M15 9v1M35 9v1M40 9v1M43 11v4" stroke="#eee"/><path d="M23 0h7v11l-3.500 3L23 11z" fill="#ddd" stroke="#333"/><path d="M26.500 1v10" stroke="#e22" stroke-width="2"/>'],
  stop: [16, '<path d="M5 5h6v6H5z" fill="#888"/>'],
  play: [16, '<path d="M5 2l7 6-7 6z" fill="#0b6a58"/>'],
  pause: [16, '<path d="M5 3v10M11 3v10" stroke="#888" stroke-width="2.500"/>'],
  playc: [16, '<circle cx="8" cy="8" r="6" fill="none" stroke="#0b6a58" stroke-width="2"/><path d="M6 4l5 4-5 4z" fill="#0b6a58"/>'],
  inf: [16, '<circle cx="4" cy="8" r="3" fill="none" stroke="#0b6a58" stroke-width="2"/><circle cx="12" cy="8" r="3" fill="none" stroke="#0b6a58" stroke-width="2"/>'],
  tostart: [16, '<path d="M3 3h2v10H3zM13 3v10L6 8z" fill="#0b6a58"/>'],
  rew: [16, '<path d="M7 3v10L0 8zM15 3v10L8 8z" fill="#0b6a58"/>'],
  ff: [16, '<path d="M1 3v10l7-5zM9 3v10l7-5z" fill="#0b6a58"/>'],
  toend: [16, '<path d="M11 3h2v10h-2zM3 3v10l7-5z" fill="#0b6a58"/>'],
  rec: [16, '<circle cx="8" cy="8" r="5" fill="#9c0f16"/><circle cx="7" cy="6.500" r="1.500" fill="#e77"/>'],
  zin: [16, mag('<path d="M4 6.500h5M6.500 4v5" stroke="#123"/>')],
  zout: [16, mag('<path d="M4 6.500h5" stroke="#999"/>', '#aaa')],
  zfull: [16, '<path d="M4 1h7l3 3v11H4z" fill="#ddd" stroke="#888"/><circle cx="7" cy="8" r="3" fill="none" stroke="#888"/><path d="M9 10l4 4" stroke="#888"/>'],
  zsel: [16, '<path d="M0 1h14v14H0z" fill="#f0e75a"/>' + mag()],
  zselr: [16, '<path d="M8 1h7v14H8z" fill="#f0e75a"/>' + mag()],
  zsell: [16, '<path d="M0 1h9v14H0z" fill="#f0e75a"/>' + mag()],
  vin: [16, '<path d="M2 2v12M0 4l2-2 2 2M0 12l2 2 2-2" fill="none" stroke="#123"/><g transform="translate(3 0) scale(.8 1)">' + mag('<path d="M4 6.500h5M6.500 4v5" stroke="#123"/>') + '</g>'],
  vout: [16, '<path d="M2 2v12M0 4l2-2 2 2M0 12l2 2 2-2" fill="none" stroke="#123"/><g transform="translate(3 0) scale(.8 1)">' + mag('<path d="M4 6.500h5" stroke="#123"/>') + '</g>'],
  doc: [12, '<path d="M1 0h7l3 3v9H1z" fill="#e9eef2"/><path d="M3 3h4M3 5h6M3 7h6M3 9h6" stroke="#345"/>'],
  caret: [6, '<path d="M0 2h6L3 5z" fill="#123"/>'],
  openx: [12, '<path d="M0 4h4l1 1h6v6H0z" fill="#fff"/><path d="M2 7h10l-2 5H0z" fill="#fff" stroke="#345" stroke-width=".7"/><path d="M6 4c0-3 2-3 4-3M8 0l2 1-2 2" fill="none" stroke="#fff"/>'],
  savex: [12, tile('<path d="M2 2v8h8V4L8 2zM4 2v3h4V2M4.500 10V7h3v3" stroke-width="1.200"/>')],
  gear: [12, tile('<circle cx="6" cy="6" r="2.500" stroke-width="1.800"/><path d="M6 1.500v1.500M6 9v1.500M1.500 6H3M9 6h1.500M3 3l1 1M8 8l1 1M9 3L8 4M4 8L3 9" stroke-width="1.500"/>')],
  sine: [12, tile('<path d="M1 6c2-5 3-4 5 0s3 4 5 0"/>')],
  fft: [12, tile('<path d="M2.500 1v9.500H11M5.500 3v7M8.500 8v2"/>')],
  list: [12, tile('<path d="M4 2.500h7M4 5h7M4 7.500h7M4 10h7"/>')],
  square: [12, tile('<path d="M1 8.500h2v-5h2.500v5H8v-5h2.500v5"/>')],
  level: [12, tile('<path d="M1 4.500h10" /><path d="M1 6h10l-1.500 2h-7z" fill="#fff" stroke="none"/>')],
  bt: [12, tile('<path d="M3.500 4l5 4L6 10V2l2.500 2-5 4"/>')],
  digital: [12, tile('<path d="M1.500 10.500v-9h2v8h2v-8h2v8h2v-8"/>')],
  sweep: [12, tile('<path d="M1 7c2-5 3-3 5 0s3 2 5-1M8.500 1v4M7 3h3"/>')],
  swap: [12, tile('<path d="M2 4h7M2 8h8" stroke-width="1.500"/><path d="M4 1L1 4l3 2zM8 6l3 2-3 3z" fill="#fff" stroke="none"/>')],
  spk: [10, '<path d="M0 3.500h2L5 1v8L2 6.500H0z" fill="#dfe8ee"/><path d="M6.500 3v4M8.500 2v6" stroke="#49667a"/>'],
  pin: [10, '<path d="M2.500 0v9" stroke="#fff"/><path d="M4 4.500h5M6.500 2v5" stroke="#fff" stroke-width="1.500"/>'],
  copyx: [12, tile('<path d="M2 10V2h4M5 4.500h5v6H5zM7.500 6v3M6 7.500h3"/>')],
  helpq: [14, '<path d="M1 0h9v9H7l-2 3-1-3H1z" fill="#12345e"/><path d="M4 3.500c0-2 3-2 3 0 0 1-1.500 1-1.500 2M5.500 6.500v1" fill="none" stroke="#fff"/><path d="M11 5h3l-1.500 2z" fill="#123"/>'],
  addsp: [12, tile('<path d="M3 0v4M1 2h4M1 8h5M10 8h2"/><path d="M5 4l5 3.500L5 11z" fill="#fff" stroke="none"/>')],
  addmeas: [12, tile('<path d="M3 1v4M1 3h4M2.500 8v3M5 6v5M7.500 7v4M10 3v8" stroke-width="1.300"/>')],
  delx: [12, tile('<path d="M3 3l6 6M9 3L3 9" stroke-width="2"/>')],
  expand: [12, tile('<path d="M2 10V2h4v2H4M5 10h5V5H7M4 7l5-5M6 1.500h3.500V5" />')],
  addg: [12, '<rect width="12" height="12" fill="#a9b2b8"/><path d="M3 2h6v8H3zM6 4v4M4 6h4" fill="none" stroke="#fff"/>'],
  popout: [10, '<path d="M4 1.500H1.500v7h7V6M4.500 5.500l4-4M6 1h3v3" fill="none" stroke="#fff" stroke-width="1.300"/>'],
  popoutb: [10, '<path d="M4 1.500H1.500v7h7V6M4.500 5.500l4-4M6 1h3v3" fill="none" stroke="#1b3c78" stroke-width="1.300"/>'],
  back: [10, '<path d="M6 1L2.500 5 6 9" fill="none" stroke="#fff" stroke-width="1.300"/>'],
  up: [8, '<path d="M1.500 5.500L4 3l2.500 2.500" fill="none" stroke="#333" stroke-width="1.300"/>'],
  down: [8, '<path d="M1.500 2.500L4 5l2.500-2.500" fill="none" stroke="#333" stroke-width="1.300"/>'],
  print: [12, tile('<path d="M3 5V2h6v3M2 5h8v4H2z"/><path d="M1.500 6h9v3h-9z" fill="#fff"/>')],
  zoomx: [12, tile('<circle cx="5" cy="5" r="3"/><path d="M7.500 7.500l3 3M3.500 5h3M5 3.500v3"/>')],
  fitx: [12, tile('<path d="M1 6h10M6 1v10M3 1v3H1M9 1v3h2M3 11V8H1M9 11V8h2"/>')],
  fitc: [12, tile('<path d="M2 2l3 3M10 2L7 5M2 10l3-3M10 10L7 7M1.500 4V1.500H4M8 1.500h2.500V4M1.500 8v2.500H4M8 10.500h2.500V8"/>')],
  table: [12, tile('<path d="M1 3.500h10M1 6h10M1 8.500h10M3.500 3v8M6 3v8M8.500 3v8" stroke-width=".8"/>')],
  graph: [12, tile('<path d="M1 2.500h10M1 10h10" stroke-width="1.500"/><path d="M1 8l3-3 3 2 4-3" stroke="#9df"/>')],
  fx: [12, tile('<path d="M6.500 2C4 1 4.500 6 3.500 10H2M2.500 5.500H6M6 6l4 4M10 6l-4 4"/>')],
  prevg: [12, '<rect width="12" height="12" fill="#a3abb1"/><path d="M3.500 2.500v7" stroke="#fff"/><path d="M9 2.500v7L5 6z" fill="#fff"/>'],
  nextg: [12, '<rect width="12" height="12" fill="#a3abb1"/><path d="M8.500 2.500v7" stroke="#fff"/><path d="M3 2.500v7L7 6z" fill="#fff"/>'],
  plus: [12, tile('<path d="M6 2v8M2 6h8" stroke-width="1.800"/>')],
  sortx: [12, tile('<path d="M3.500 1v9M1.500 3l2-2M1.500 8l2 2.500 2-2M7 2h2v3M7 8h3v3H7"/>')],
  upl: [10, '<path d="M5 1l3 3.500H2zM4.500 4h1v2h-1z" fill="#1b4a78"/><path d="M1 8h8" stroke="#1b4a78" stroke-width="1.300"/>'],
  grip: [8, '<path d="M6 1h1M6 4h1M3 4h1M6 7h1M3 7h1M0 7h1" stroke="#888"/>'],
  folder: [12, '<path d="M1 2h4l1 1h5v7H1z" fill="#dfe5e8" stroke="#47606f"/><path d="M3.500 5H12l-2 6H1z" fill="#5f7885"/>'],
  sp: [12, '<rect width="12" height="12" fill="#b9c9d4"/><path d="M2 1v10M10 1v10M0 3h2M0 9h2M10 3h2M10 9h2" stroke="#6f8b9c"/><path d="M4 3l5 3-5 3z" stroke="#54788d" fill="#fff"/>'],
  dotb: [12, '<circle cx="6" cy="6" r="3.300" fill="#3c5d73"/>'],
  none: [12, '<circle cx="6" cy="6" r="4.500" fill="none" stroke="#3c5d73" stroke-width="1.200"/><path d="M3 3l6 6" stroke="#3c5d73" stroke-width="1.200"/>'],
  report: [12, '<path d="M2 1h9v10H2z" fill="#fff" stroke="#234"/><path d="M0 3h4M0 6h4M0 9h4M5 4h4M5 6h4M5 8h4" stroke="#234"/>'],
  dout: [12, '<path d="M1 1h9v10H1z" fill="#fff" stroke="#234"/><path d="M1 3.500h9M1 6h4M4 8h6M8 5.500L11 8l-3 3z" stroke="#234" fill="#234"/>'],
  arR: [7, '<path d="M1 0v7l5-3.500z" fill="currentColor"/>'],
  arD: [7, '<path d="M0 2h7L3.500 6z" fill="currentColor"/>'],
  winlogo: [12, '<path d="M0 1.700L5 1v4.700H0zM5.700.900L12 0v5.700H5.700zM0 6.300h5V11l-5-.7zM5.700 6.300H12V12l-6.300-.9z" fill="#fff"/>'],
  mag: [13, '<circle cx="8" cy="5" r="3.800" fill="none" stroke="#333"/><path d="M5 8l-4 4" stroke="#333"/>'],
  cortana: [16, '<circle cx="8" cy="8" r="6" fill="none" stroke="#fff" stroke-width="1.800"/>'],
  tview: [16, '<path d="M2 2v2h8V2M2 6.500h8v4H2zM2 15v-2h8v2M14 1v2M14 6v9" fill="none" stroke="#eee" stroke-width="1.200"/>'],
  folderw: [16, '<path d="M0 2h6l1 2h9v10H0z" fill="#f6c544"/><path d="M0 6h16v8H0z" fill="#fbda73"/><path d="M3 14V9h10v5h-3v-3H6v3z" fill="#2d8fdd"/>'],
  chrome: [16, '<circle cx="8" cy="8" r="7.500" fill="#e33b2e"/><path d="M1.500 4.300A7.500 7.500 0 0 0 8 15.500l3.500-6z" fill="#2ba24c"/><path d="M8 15.500A7.500 7.500 0 0 0 14.800 5H8l3.300 5z" fill="#fcc934"/><circle cx="8" cy="8" r="3.500" fill="#fff"/><circle cx="8" cy="8" r="2.700" fill="#3b7de0"/>'],
  edge: [16, '<circle cx="8" cy="8" r="7.500" fill="#1577c8"/><path d="M.5 8C1-1 14-2 15.500 7c0 4-6 4-6 2 2-4-5-5-9-1z" fill="#38c8b4"/><path d="M5.500 9c0 4 5 5 9 3-3 5-10 4-12-1 0-2 2-4 4-3z" fill="#0c4f9e"/>'],
  chevup: [12, '<path d="M2 8l4-4 4 4" fill="none" stroke="#fff"/>'],
  net: [12, '<path d="M3 3h8.500v6H3zM5 11h5M7 9v2M0 1h3v4M1.500 5v6" fill="none" stroke="#fff"/>'],
  snd: [12, '<path d="M0 4.500h2l3-2v7l-3-2H0z" fill="none" stroke="#fff" stroke-width=".8"/><path d="M6.500 4.500v3M8 3.500c1 1 1 4 0 5M10 2c2 2 2 6 0 8" fill="none" stroke="#fff" stroke-width=".8"/>'],
  notif: [17, '<path d="M1 2h11v9H5l-2 2v-2H1z" fill="#fff"/><path d="M3 4.500h7M3 6.500h7M3 8.500h4" stroke="#222"/><circle cx="11.500" cy="11.500" r="4.800" fill="#333" stroke="#bbb"/><text x="11.500" y="14" font-size="7" fill="#fff" text-anchor="middle">2</text>'],
};
const markup = n => ICONS[n][1];
const svg = (n, c = '') => `<svg class="${c}" viewBox="0 0 ${ICONS[n][0]} ${ICONS[n][0]}">${markup(n)}</svg>`;

document.querySelectorAll('[data-tools]').forEach(el => {
  el.innerHTML = el.dataset.tools.split(' ').map(t => {
    const n = t.replace('!', '');
    return `<button class="${n}${t.endsWith('!') ? ' down' : ''}" aria-label="${n}">${svg(n)}</button>`;
  }).join('');
});
document.querySelectorAll('[data-icon]').forEach(el => {
  const n = el.dataset.icon;
  if (el.tagName.toLowerCase() === 'svg') {
    if (ICONS[n][0]) el.setAttribute('viewBox', `0 0 ${ICONS[n][0]} ${ICONS[n][0]}`);
    el.innerHTML = markup(n);
  } else el.innerHTML = svg(n);
});

// level, arrow (R/D), checkbox (0/1), icon, text, row class
const ROWS = [
  [0, '', '', 'folder', 'Project'], [1, '', '', 'gear', 'Sequencer Properties...'], [1, 'R', '', 'folder', 'Pre-Sequence Steps'],
  [1, 'D', 1, 'sp', 'Signal Path1', 'blue'], [2, 'D', 1, 'folder', 'Signal Path Setup', 'blue'],
  [3, '', '', 'gear', 'Measurement Sequence Settings...', 'blue'], [3, 'R', '', 'folder', 'Sequence Steps', 'blue'],
  [3, '', 0, 'dotb', 'RMS Level', 'blue'], [3, '', 0, 'none', 'RMS Level (AC+DC)', 'blue'], [3, '', 0, 'none', 'Gain', 'blue'],
  [3, '', 0, 'dotb', 'THD+N Ratio', 'blue'], [3, '', 0, 'dotb', 'Frequency', 'blue'], [3, '', 0, 'none', 'Bits', 'blue'], [3, '', 0, 'none', 'Error Rate', 'blue'],
  [2, 'R', 0, 'folder', 'Level and Gain', 'blue'], [2, 'R', 0, 'folder', 'THD+N', 'blue'], [2, 'R', 0, 'none', 'Frequency Response', 'blue'],
  [2, 'D', 0, 'folder', 'Signal to Noise Ratio', 'cur'], [3, '', '', 'gear', 'Measurement Sequence Settings...', 'blue'],
  [3, 'R', '', 'folder', 'Sequence Steps', 'blue'], [3, '', 0, 'dotb', 'Signal to Noise Ratio', 'hl'],
  [2, 'R', 0, 'none', 'Crosstalk, One Channel Undriven', 'blue'], [2, 'R', 0, 'none', 'Interchannel Phase', 'blue'],
  [2, '', '', 'addmeas', 'Add Measurement...', 'blue'], [1, '', '', 'addsp', 'Add Signal Path'], [1, 'D', '', 'folder', 'Post-Sequence Steps'],
  [2, '', '', 'plus', 'Add Step...'], [2, '', 1, 'report', 'Report'], [2, '', 0, 'dout', 'Data Output'],
];
document.getElementById('tree').innerHTML = ROWS.map(([l, a, c, i, t, k = '']) =>
  `<li class="l${l} ${k}">${l ? `<span class="ar">${a ? svg('ar' + a) : ''}</span>` : ''}${c === '' ? '' : `<input type="checkbox" aria-label="${t}"${c ? ' checked' : ''}>`}${svg(i, 'ic')}<span class="lbl">${t}</span></li>`).join('');

const line = (x1, y1, x2, y2, c, w = 1) => `<path d="M${x1} ${y1}L${x2} ${y2}" stroke="${c}" stroke-width="${w}"/>`;
const text = (x, y, s, a = 'start', size = 8, fill = '#222', extra = '') => `<text x="${x}" y="${y}" text-anchor="${a}" font-size="${size}" fill="${fill}" ${extra}>${s}</text>`;

// waveform editor
{
  const top = 24, mid = 255.5, bot = 486, L = 5, R = 195;
  const db = [[1, 206], [2, 184], [3, 164], [4, 146], [6, 116], [9, 82], [12, 58], [15, 41], [21, 21], [27, 11]];
  let s = `<path d="M4 8h191v9H4z" fill="#6d7a74"/><path d="M5 9h190v7H5z" fill="#3ee79e"/><path d="M${R} ${top}h27v463h-27z" fill="#696969"/><path d="M${L} ${bot}h190v12H5z" fill="#696969"/><path d="M${L} ${top}h190v${bot - top}H5z" fill="#000"/>`;
  for (let i = 1; i < 6; i++) s += line(L + i * 31.6, top, L + i * 31.6, bot, '#032b03') + text(L + i * 31.6, 496, `0:${String(i * 5).padStart(2, '0')}.0`, 'middle', 7, '#e8e8e8');
  db.forEach(([v, d]) => [mid - d, mid + d].forEach(y => {
    s += line(L, y, R, y, v === 1 ? '#9a9a9a' : '#032b03', v === 1 ? 1.5 : 1) + line(R, y, R + 3, y, '#fff') + text(R + 4, y + 2.5, '-' + v, 'start', 7, '#e8e8e8');
  }));
  for (let i = 0; i < 7; i++) s += `<rect x="${17 + i * 25.3}" y="232" width="13.500" height="47" fill="#4bf3a9"/>`;
  s += line(L, mid, R, mid, '#3c9c68') + text(R + 4, mid + 2.5, '-∞', 'start', 7, '#e8e8e8') + text(R + 3, 30, 'dB', 'start', 7, '#e8e8e8');
  for (let y = top; y < bot; y += 4) s += line(R, y, R + 1.5, y, '#bbb');
  for (let x = L; x < R; x += 6.3) s += line(x, bot, x, bot + 2, '#ddd');
  s += line(R + .5, top, R + .5, 499, '#bbb') + line(L, 486.5, 222, 486.5, '#bbb') + line(L, 498.5, R, 498.5, '#ccc') + line(222.5, top, 222.5, 487, '#bbb');
  s += text(L, 496, 'hms', 'start', 7, '#e8e8e8') + text(R - 2, 496, 'hms', 'end', 7, '#e8e8e8');
  s += `<path d="M5.500 24v462" stroke="#c8b820" stroke-dasharray="2 1"/><path d="M2 20h7l-3.500 4zM2 503h7l-3.500-4z" fill="#f5ea1c"/>`;
  document.getElementById('edit').innerHTML = s;
}

// level scale
{
  const v = ['dB'];
  for (let i = 69; i > 0; i -= 3) v.push('-' + i);
  v.push('0');
  document.getElementById('scale').innerHTML = v.map(t => `<span>${t}</span>`).join('');
}

// scope
{
  const L = 31, R = 188, t = 12, b = 128, m = 70;
  let s = text(109, 9, 'Scope', 'middle', 8), seed = 11;
  const rnd = () => (seed = (seed * 16807) % 2147483647) / 2147483647;
  for (let i = 0; i < 6; i++) s += line(L + i * 28.9, t, L + i * 28.9, b, '#ccc') + line(L + 14.4 + i * 28.9, t, L + 14.4 + i * 28.9, b, i < 5 ? '#e6e6e6' : 'none');
  [-4, -2, 2, 4].forEach(k => s += line(L, m + k * 11.7, R, m + k * 11.7, '#ccc') + line(L, m + (k - Math.sign(k)) * 11.7, R, m + (k - Math.sign(k)) * 11.7, '#e6e6e6'));
  let d = '';
  for (let x = L; x < R; x += .7) d += `M${x.toFixed(1)} ${(m - 6 - rnd() * 11).toFixed(1)}V${(m + 6 + rnd() * 12).toFixed(1)}`;
  for (let x = L + 2; x < R; x += 3.5 + rnd() * 3) d += `M${x.toFixed(1)} ${(m - 15 - rnd() * 8).toFixed(1)}V${m + 19}`;
  d += 'M41.500 42V88M83.500 42V90M128.500 39V80M116.500 60V98M67.500 48V80M108.500 47V85M164 46V84';
  s += `<path d="${d}" stroke="#3a5596" stroke-width=".7"/>` + line(L, m, R, m, '#2f4a8a');
  s += `<path d="M31.500 12.500h156v116h-156z" fill="none" stroke="#777"/>`;
  [['8u', 26], ['4u', 50], ['0', 73], ['-4u', 96], ['-8u', 120]].forEach(([v, y]) => s += text(28, y, v, 'end', 8));
  ['0', '40m', '80m', '120m', '160m', '200m'].forEach((v, i) => s += text(L + i * 28.9, 138, v, 'middle', 8));
  s += text(109, 147, 'Time (s)', 'middle', 8) + text(12, 70, 'Instantaneous Level (V)', 'middle', 8, '#222', 'transform="rotate(-90 12 70)"');
  document.getElementById('scope').innerHTML = s;
}

// result chart
{
  const L = 36.5, R = 374.5, t = 22.5, b = 498.5, st = (R - L) / 14;
  let s = text(204, 8, 'Signal to Noise Ratio', 'middle', 8) + text(372, 18, '2021-04-13 오후 12:45:33.533', 'end', 8);
  for (let i = 1; i < 14; i++) s += line(L + i * st, t, L + i * st, b, i % 2 ? '#ececec' : '#cfcfcf');
  s += line(L, 260.5, R, 260.5, '#cfcfcf');
  s += `<path d="M${L} 180.500h231v159h-231z" fill="#4a629a" stroke="#27478c"/>` + line(L, 260.5, 267, 260.5, '#3a5490');
  s += `<path d="M${L} ${t}H${R}V${b}H${L}z" fill="none" stroke="#8d8d8d"/>`;
  for (let i = 0; i <= 14; i += 2) s += text(L + i * st, 515, i * 10, 'middle', 13);
  s += text(204, 527, 'Signal to Noise Ratio (dB)', 'middle', 8) + text(32, 265, 'Ch1', 'end', 13);
  s += `<path d="M376 255h11v11h-11z" fill="#4a629a"/>` + text(403, 265, '95.722', 'start', 13) + text(467, 265, 'dB', 'end', 13);
  s += '<g fill="none" stroke="#1d6fb0"><path d="M355 28c4-3 12-2 12 4 0 4-4 5-7 5" stroke="#5b9fd0" stroke-width="1.500"/><path d="M352 37l6-8v8M354 34h4M360 40l1-8c5-2 4 5 0 4" stroke-width="1.500"/></g>';
  document.getElementById('chart').innerHTML = s;
}
```
